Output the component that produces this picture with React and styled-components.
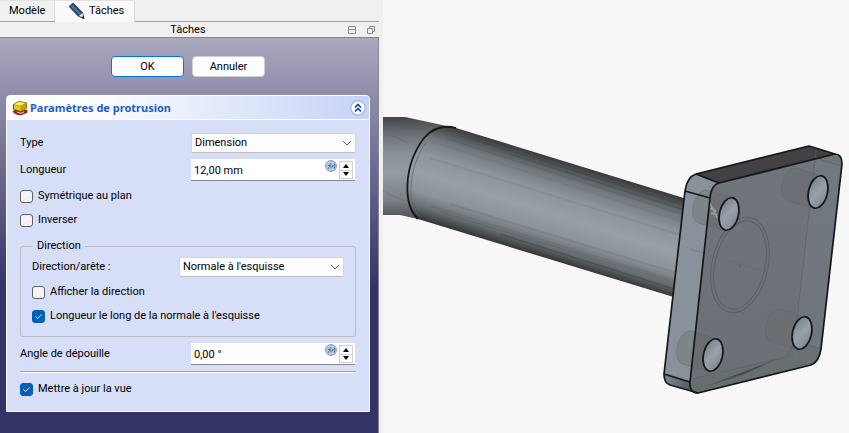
import React from "react";
import styled, { createGlobalStyle } from "styled-components";

const Global = createGlobalStyle`
  * { box-sizing: border-box; }
  body { margin: 0; background: #f7f7f7; }
  body, button, input, select {
    font-family: Roboto, "Noto Sans", sans-serif;
    font-size: 11px;
    line-height: 16px;
    color: #000;
  }
`;

const Window = styled.main`
  display: flex;
  min-height: 100vh;
`;

const Dock = styled.aside`
  flex: 0 0 383px;
  display: flex;
  flex-direction: column;
  background: #f0f0f0;
  padding-right: 4px;
`;

const Tabs = styled.div`
  display: flex;
  align-items: stretch;
  height: 22px;
  background: linear-gradient(#a0a0a0, #a0a0a0) bottom / 100% 1px no-repeat;
`;

const Tab = styled.button`
  display: flex;
  align-items: center;
  gap: 4px;
  width: ${(p) => (p.$active ? "80px" : "55px")};
  height: ${(p) => (p.$active ? "22px" : "21px")};
  padding: 0 9px 1px ${(p) => (p.$active ? "14px" : "9px")};
  border: 0;
  border-top: 1px solid #e2e2e2;
  border-right: 1px solid #dcdcdc;
  background: ${(p) => (p.$active ? "#f9f9f9" : "#f1f1f1")};
`;

const DockTitle = styled.header`
  display: grid;
  grid-template-columns: 1fr auto 1fr;
  align-items: center;
  height: 16px;
  border-bottom: 1px solid #85858f;
  padding-right: 3px;
`;

const TitleText = styled.h1`
  grid-column: 2;
  margin: 0;
  font-size: 11px;
  line-height: 14px;
  font-weight: 400;
`;

const TitleTools = styled.div`
  justify-self: end;
  display: flex;
  gap: 9px;
`;

const ToolButton = styled.button`
  display: flex;
  padding: 0;
  border: 0;
  background: none;
`;

const TaskArea = styled.div`
  flex: 1;
  padding: 18px 8px 20px 6px;
  border-right: 1px solid #85858f;
  background: linear-gradient(#a9a9bf 0, #9390ad 50px, #333366 250px);
`;

const Actions = styled.div`
  display: flex;
  justify-content: center;
  gap: 8px;
  margin-bottom: 18px;
`;

const PushButton = styled.button`
  width: 73px;
  height: 21px;
  padding: 0;
  border: 1px solid ${(p) => (p.$default ? "#0078d4" : "#d0d0d0")};
  border-radius: 4px;
  background: #fdfdfd;
`;

const Panel = styled.section`
  border: 1px solid #fff;
  border-radius: 4px 4px 0 0;
  background: #d6dff7;
`;

const PanelHeader = styled.header`
  display: flex;
  align-items: center;
  height: 24px;
  gap: 2px;
  padding: 0 3px 0 5px;
  border-bottom: 1px solid #fff;
  border-radius: 3px 3px 0 0;
  background: linear-gradient(90deg, #fff 0, #fff 20%, #c6d3f7 100%);
`;

const PanelTitle = styled.h2`
  flex: 1;
  margin: 0;
  font-family: "Noto Sans", sans-serif;
  font-size: 11px;
  line-height: 16px;
  font-weight: 700;
  color: #215dc6;
`;

const PanelBody = styled.form`
  padding: 13px 13px 10px;
`;

const FieldRow = styled.div`
  display: flex;
  align-items: center;
  justify-content: space-between;
  height: ${(p) => (p.$tall ? "22px" : "20px")};
  margin-bottom: ${(p) => p.$after}px;
`;

const SelectBox = styled.div`
  display: grid;
  align-items: center;
  width: 165px;

  select,
  svg {
    grid-area: 1 / 1;
  }

  svg {
    justify-self: end;
    margin-right: 4px;
    pointer-events: none;
  }
`;

const Select = styled.select`
  appearance: none;
  width: 100%;
  height: 20px;
  padding: 0 20px 0 3px;
  border: 1px solid #d5d5d5;
  border-bottom-color: #bdbdbd;
  border-radius: 2px;
  background: #fdfdfd;
`;

const SpinBox = styled.div`
  display: flex;
  width: 164px;
  height: 22px;
  margin-right: 1px;
  padding: 1px 2px 0 0;
  border-bottom: 1px solid #868686;
  background: #fff;
`;

const SpinInput = styled.input`
  flex: 1;
  min-width: 0;
  padding: 2px 3px 0;
  border: 0;
  background: none;
  outline: 0;
`;

const SpinButtons = styled.div`
  display: flex;
  flex-direction: column;
  width: 14px;
  margin: 1px 0 1px 2px;
  background: #fdfdfd;
  border: 1px solid #d0d0d0;
`;

const StepButton = styled.button`
  flex: 1;
  display: flex;
  align-items: center;
  justify-content: center;
  padding: 0;
  border: 0;
  background: none;

  & + & {
    border-top: 1px solid #d0d0d0;
  }
`;

const CheckLabel = styled.label`
  display: flex;
  align-items: center;
  gap: 5px;
  height: 24px;
`;

const CheckInput = styled.input`
  appearance: none;
  width: 13px;
  height: 13px;
  margin: 0;
  border: 1px solid #626262;
  border-radius: 3px;
  background: #f3f3f3;

  &:checked {
    border-color: #005fb8;
    background: #005fb8
      url("data:image/svg+xml,%3Csvg xmlns='http://www.w3.org/2000/svg' viewBox='0 0 11 11'%3E%3Cpath d='M2.5 5.5l2 2 4-4' fill='none' stroke='white'/%3E%3C/svg%3E");
  }
`;

const Group = styled.fieldset`
  min-width: 0;
  margin: 6px 0;
  padding: 3px 11px 8px;
  border: 1px solid #bbbcc0;
  border-radius: 3px;

  legend {
    height: 16px;
    margin-left: 1px;
    padding: 0 4px;
  }
`;

const Rule = styled.hr`
  height: 2px;
  margin: 6px 0 4px;
  border: 0;
  border-top: 1px solid #a0a0a0;
  background: #fff;
`;

const Viewport = styled.section`
  flex: 1;
  min-width: 0;
  display: flex;
  background: #f7f7f7;

  svg {
    width: 100%;
    height: auto;
  }
`;

const Pencil = () => (
  <svg width="16" height="16" viewBox="0 0 16 16" aria-hidden="true">
    <path d="M0 3.500L4 0 13.500 9.500 14.500 15.500 9 13z" fill="#24496f" stroke="#152f4d" strokeWidth=".7" />
    <path d="M2.500 2.500L11.500 11.500" stroke="#4779a8" strokeWidth="2" />
    <path d="M9.500 13L13.500 9.500 15 15.400z" fill="#e8e8e2" stroke="#333" strokeWidth=".5" />
    <path d="M12.500 14.800L14.500 12.800 15.500 15.800z" fill="#111" />
  </svg>
);

const PadIcon = () => (
  <svg width="16" height="16" viewBox="0 0 16 16" aria-hidden="true">
    <path d="M1 11.5L5 9.5 15 10.5 15 12.5 8 15 3 13.5z" fill="#c41c1c" stroke="#5b0808" strokeWidth=".8" />
    <path d="M5 12l4 1.4 3-1.6" fill="none" stroke="#fff" strokeWidth=".8" />
    <path d="M1.5 4.5L6.5 1.5 14.5 3 14.5 8.5 8.5 11.5 1.5 9.5z" fill="#e8c61c" stroke="#594700" strokeWidth=".9" />
    <path d="M1.5 4.5L6.5 1.5 14.5 3 8.5 6z" fill="#ffed60" stroke="#7a6500" strokeWidth=".4" />
    <path d="M8.5 6L14.5 3 14.5 8.5 8.5 11.5z" fill="#c9a000" />
  </svg>
);

const Chevron = () => (
  <svg width="10" height="6" viewBox="0 0 10 6" aria-hidden="true">
    <path d="M1 1l4 4 4-4" fill="none" stroke="#5c5c5c" />
  </svg>
);

const Collapse = () => (
  <svg width="16" height="16" viewBox="0 0 16 16" aria-hidden="true">
    <circle cx="8" cy="8" r="7.2" fill="#fff" stroke="#b0b8dc" strokeWidth="1.4" />
    <path d="M5 7.5l3-3 3 3M5 11.5l3-3 3 3" fill="none" stroke="#0a42b0" strokeWidth="1.6" />
  </svg>
);

const Formula = () => (
  <svg width="12" height="12" viewBox="0 0 12 12" aria-hidden="true">
    <circle cx="6" cy="6" r="5.4" fill="#b9cde2" stroke="#7f95ac" />
    <path d="M3.4 9c1 0 .6-5.500 2-5.500M2.800 5.500h2.200M6.200 3.600q-1 2.400 0 4.800M9.400 3.600q1 2.400 0 4.800M6.900 4.800l2 2.600M8.900 4.800l-2 2.600" fill="none" stroke="#436a95" strokeWidth=".8" />
  </svg>
);

function Spin({ id, value }) {
  return (
    <SpinBox>
      <SpinInput id={id} defaultValue={value} />
      <Formula />
      <SpinButtons>
        <StepButton type="button" aria-label="Augmenter">
          <svg width="6" height="4" viewBox="0 0 6 4"><path d="M0 4L3 0l3 4z" /></svg>
        </StepButton>
        <StepButton type="button" aria-label="Diminuer">
          <svg width="6" height="4" viewBox="0 0 6 4"><path d="M0 0l3 4 3-4z" /></svg>
        </StepButton>
      </SpinButtons>
    </SpinBox>
  );
}

function Choice({ id, value }) {
  return (
    <SelectBox>
      <Select id={id} defaultValue={value}>
        <option>{value}</option>
      </Select>
      <Chevron />
    </SelectBox>
  );
}

function Check({ children, checked }) {
  return (
    <CheckLabel>
      <CheckInput type="checkbox" defaultChecked={checked} />
      {children}
    </CheckLabel>
  );
}

const HOLES = [[729, 214], [818, 192], [713, 355], [802, 333]];
const FACE = "M710 198Q711 185 719 183L835 154Q842 154 842 164L821 349Q819 362 811 365L698 393Q689 393 690 382Z";

function Model() {
  return (
    <svg viewBox="383 0 466 433" role="img" aria-label="Vue 3D">
      <defs>
        <linearGradient id="tube" gradientUnits="userSpaceOnUse" x1="530" y1="151" x2="501" y2="244">
          <stop offset="0" stopColor="#3a3c3e" />
          <stop offset=".07" stopColor="#505458" />
          <stop offset=".18" stopColor="#737a7f" />
          <stop offset=".34" stopColor="#8d959c" />
          <stop offset=".55" stopColor="#989fa7" />
          <stop offset=".74" stopColor="#8c939a" />
          <stop offset=".88" stopColor="#676d71" />
          <stop offset="1" stopColor="#35373a" />
        </linearGradient>
        <linearGradient id="bend" x1="0" y1="0" x2="0" y2="1">
          <stop offset="0" stopColor="#414447" />
          <stop offset=".15" stopColor="#676c71" />
          <stop offset=".35" stopColor="#8a9198" />
          <stop offset=".55" stopColor="#939ba3" />
          <stop offset=".8" stopColor="#7b8187" />
          <stop offset="1" stopColor="#4b4e51" />
        </linearGradient>
        <linearGradient id="hole" x1="0" y1="0" x2="1" y2="1">
          <stop offset="0" stopColor="#737a80" />
          <stop offset=".5" stopColor="#98a1aa" />
          <stop offset="1" stopColor="#7a8188" />
        </linearGradient>
        <linearGradient id="face" x1="0" y1="0" x2="0" y2="1">
          <stop offset="0" stopColor="#70757c" />
          <stop offset="1" stopColor="#6b7076" />
        </linearGradient>
        <linearGradient id="corner" x1="0" y1="0" x2="1" y2="0">
          <stop offset="0" stopColor="#7c848b" />
          <stop offset="1" stopColor="#4d5155" />
        </linearGradient>
      </defs>

      <path d="M383 117H405L456 128 445 220 418 219 400 215H383Z" fill="url(#bend)" />
      <path d="M400 126L440 132M388 134Q398 137 407 143M383 191Q393 197 406 201" fill="none" stroke="#565b60" strokeWidth=".7" opacity=".5" />
      <path d="M417 219Q402 204 408 172 414 145 431 131 443 123 456 128L700 203 690 302 418 219Z" fill="url(#tube)" />
      <g fill="none" stroke="#3d4144" strokeWidth="1">
        <path d="M466 137L690 207" opacity=".45" />
        <path d="M510 154L690 212" opacity=".4" />
        <path d="M445 138L690 217M440 212L690 287" opacity=".2" />
        <path d="M500 234L690 294" opacity=".6" />
        <path d="M450 204L690 277M430 206L690 285" stroke="#5c6165" strokeWidth="2" opacity=".22" />
        <path d="M440 144L690 224M430 158L690 238" stroke="#60656a" strokeWidth="2" opacity=".16" />
      </g>
      <path d="M418 219C403 205 403 166 424 138Q437 123 456 128" fill="none" stroke="#16181a" strokeWidth="1.800" />
      <path d="M419 216C404 199 412 161 426 142" fill="none" stroke="#60666b" strokeWidth=".8" />

      <path d="M685 191Q687 177 696 174L719 183Q711 185 710 198L690 382 698 393 670 385Q664 382 664 374Z" fill="#89929a" />
      <path d="M664 374L690 382Q690 393 698 393L670 385Q664 382 664 374Z" fill="url(#corner)" />
      <path d="M696 174L809 146 835 154 719 183Z" fill="#424246" />
      <path d={FACE} fill="url(#face)" />
      <path d="M816 158L842 166 821 349 Q819 361 811 365L793 360 797 320Z" fill="#7b828a" opacity=".3" />
      <path d="M690 380L780 357Q791 352 793 340L821 349Q819 362 811 365L698 393Q690 393 690 380Z" fill="#646b6d" opacity=".5" />

      <g fill="#676b6e" fillOpacity=".35" stroke="#575b60" strokeWidth=".8" strokeOpacity=".4">
        {HOLES.map(([x, y]) => (
          <path key={x} d={`M${x + 4} ${y - 16}L${x - 22} ${y - 24}C${x - 35} ${y - 25} ${x - 42} ${y + 4} ${x - 31} ${y + 9}L${x - 5} ${y + 16}Z`} />
        ))}
      </g>
      <g fill="none" stroke="#5c6065" strokeWidth="1">
        <ellipse cx="740" cy="265" rx="28" ry="48.500" transform="rotate(13 740 265)" />
        <ellipse cx="740" cy="265" rx="25" ry="45" transform="rotate(13 740 265)" />
        <path d="M690 249L769 273" opacity=".25" />
        <path d="M816 151L797 320 793 345Q790 355 783 358L692 379M816 158L841 166M793 340L821 349" opacity=".65" />
        <circle cx="740" cy="266" r="1" />
      </g>
      <path d="M704 387L777 359 742 375Z" fill="#484c50" />
      <path d="M710 203L717 218M710 208L716 211M711 213L717 215" fill="none" stroke="#98a1a8" strokeWidth="1.400" />

      <g fill="none" stroke="#141618" strokeWidth="1.700" strokeLinejoin="round">
        <path d={FACE} />
        <path d="M685 191Q687 177 696 174L809 146 835 154M696 174L719 183M685 191L710 198M685 191L664 374Q664 383 670 385L698 393M664 374L690 382" />
        {HOLES.map(([x, y]) => (
          <ellipse key={x} cx={x} cy={y} rx="9.500" ry="16.500" fill="url(#hole)" transform={`rotate(13 ${x} ${y})`} />
        ))}
      </g>
    </svg>
  );
}

export default function App() {
  return (
    <Window>
      <Global />
      <Dock>
        <Tabs role="tablist">
          <Tab role="tab" aria-selected="false">Modèle</Tab>
          <Tab role="tab" aria-selected="true" $active>
            <Pencil />
            Tâches
          </Tab>
        </Tabs>
        <DockTitle>
          <TitleText>Tâches</TitleText>
          <TitleTools>
            <ToolButton aria-label="Réduire">
              <svg width="10" height="10" viewBox="0 0 10 10"><path d="M1.500 1.500h7v7h-7zM1.500 4.500h7" fill="none" stroke="#8c8c8c" /></svg>
            </ToolButton>
            <ToolButton aria-label="Détacher">
              <svg width="10" height="10" viewBox="0 0 10 10"><path d="M3.500 3.500v-2h5v5h-2M1.500 3.500h5v5h-5z" fill="none" stroke="#8c8c8c" /></svg>
            </ToolButton>
          </TitleTools>
        </DockTitle>
        <TaskArea>
          <Actions>
            <PushButton $default>OK</PushButton>
            <PushButton>Annuler</PushButton>
          </Actions>
          <Panel>
            <PanelHeader>
              <PadIcon />
              <PanelTitle>Paramètres de protrusion</PanelTitle>
              <ToolButton aria-label="Replier"><Collapse /></ToolButton>
            </PanelHeader>
            <PanelBody>
              <FieldRow $after={6}>
                <label htmlFor="type">Type</label>
                <Choice id="type" value="Dimension" />
              </FieldRow>
              <FieldRow $tall $after={3}>
                <label htmlFor="length">Longueur</label>
                <Spin id="length" value="12,00 mm" />
              </FieldRow>
              <Check>Symétrique au plan</Check>
              <Check>Inverser</Check>
              <Group>
                <legend>Direction</legend>
                <FieldRow $after={3}>
                  <label htmlFor="direction">Direction/arête :</label>
                  <Choice id="direction" value="Normale à l'esquisse" />
                </FieldRow>
                <Check>Afficher la direction</Check>
                <Check checked>Longueur le long de la normale à l'esquisse</Check>
              </Group>
              <FieldRow $tall $after={6}>
                <label htmlFor="angle">Angle de dépouille</label>
                <Spin id="angle" value="0,00 °" />
              </FieldRow>
              <Rule />
              <Check checked>Mettre à jour la vue</Check>
            </PanelBody>
          </Panel>
        </TaskArea>
      </Dock>
      <Viewport>
        <Model />
      </Viewport>
    </Window>
  );
}
